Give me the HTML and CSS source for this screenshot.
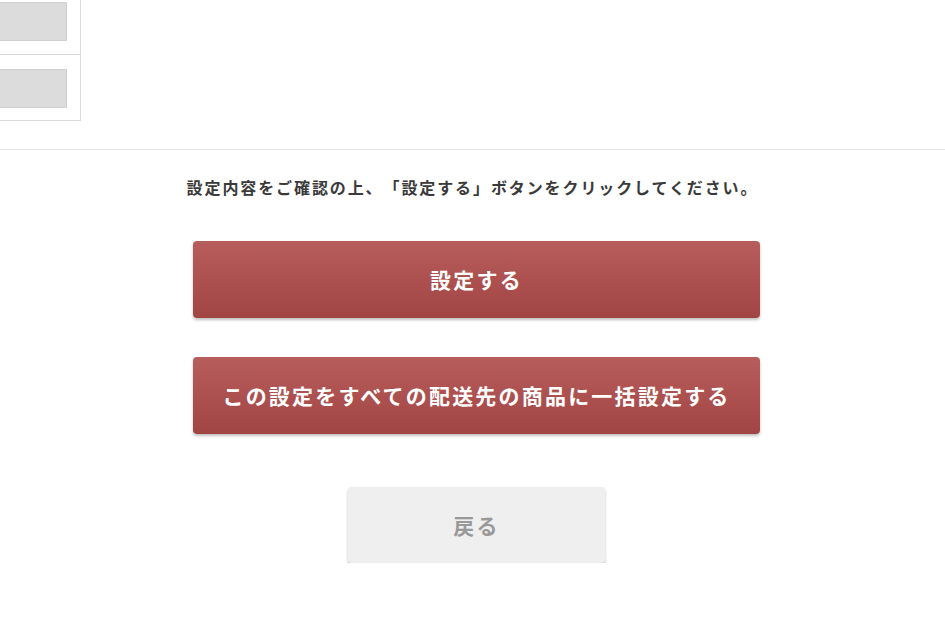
FILE: index.html
```html
<!DOCTYPE html>
<html lang="ja">
    <head>
        <meta charset="utf-8">
        <title>設定内容の確認</title>
        <link rel="stylesheet" href="styles.css">
    </head>
    <body>
        <div class="summary">
            <div class="summary-row"><div class="field"></div></div>
            <div class="summary-row"><div class="field"></div></div>
        </div>

        <div class="confirm">
            <p class="message">設定内容をご確認の上、「設定する」ボタンをクリックしてください。</p>
            <div class="actions">
                <button class="btn btn-primary">設定する</button>
                <button class="btn btn-primary">この設定をすべての配送先の商品に一括設定する</button>
                <button class="btn btn-back">戻る</button>
            </div>
        </div>
    </body>
</html>
```

FILE: styles.css
```css
body{
    margin: 0;
    padding: 0;
    font-family: "Noto Sans CJK JP", "Noto Sans", sans-serif;
    color: #333;
    background: #fff;
    overflow: hidden;
    text-spacing-trim: space-all;
}

.summary{
    width: 119px;
    margin-left: -40px;
    margin-top: -12px;
    border: 1px solid #dadada;
    border-top: none;
}
.summary-row{
    height: 66px;
    padding: 14px 13px 0 0;
    box-sizing: border-box;
}
.summary-row + .summary-row{
    border-top: 1px solid #dadada;
}
.field{
    height: 39px;
    background: #dcdcdc;
    border: 1px solid #d0d0d0;
    box-sizing: border-box;
}

.confirm{
    margin-top: 28px;
    border-top: 1px solid #e2e2e2;
}
.message{
    margin: 25px 0 0;
    text-align: center;
    font-size: 16px;
    font-weight: bold;
    letter-spacing: 1.9px;
    line-height: 24px;
    color: #3a3a3a;
}

.actions{
    display: flex;
    flex-direction: column;
    align-items: center;
    padding-left: 8px;
    margin-top: 42px;
}
.btn{
    font-family: inherit;
    font-size: 21px;
    font-weight: bold;
    letter-spacing: 2.2px;
    border: none;
    border-radius: 4px;
    padding-top: 0;
    cursor: pointer;
    box-shadow: 0 2px 3px rgba(0, 0, 0, 0.25);
}
.btn-primary{
    width: 567px;
    height: 77px;
    color: #fff;
    background: linear-gradient(#b75d5b, #a14544);
    margin-bottom: 39px;
}
.btn-primary:hover{
    background: linear-gradient(#a85250, #8f3a39);
}
.btn-primary + .btn-primary{
    margin-bottom: 53px;
}
.btn-back{
    width: 257px;
    height: 76px;
    color: #999;
    background: #efefef;
}
```
